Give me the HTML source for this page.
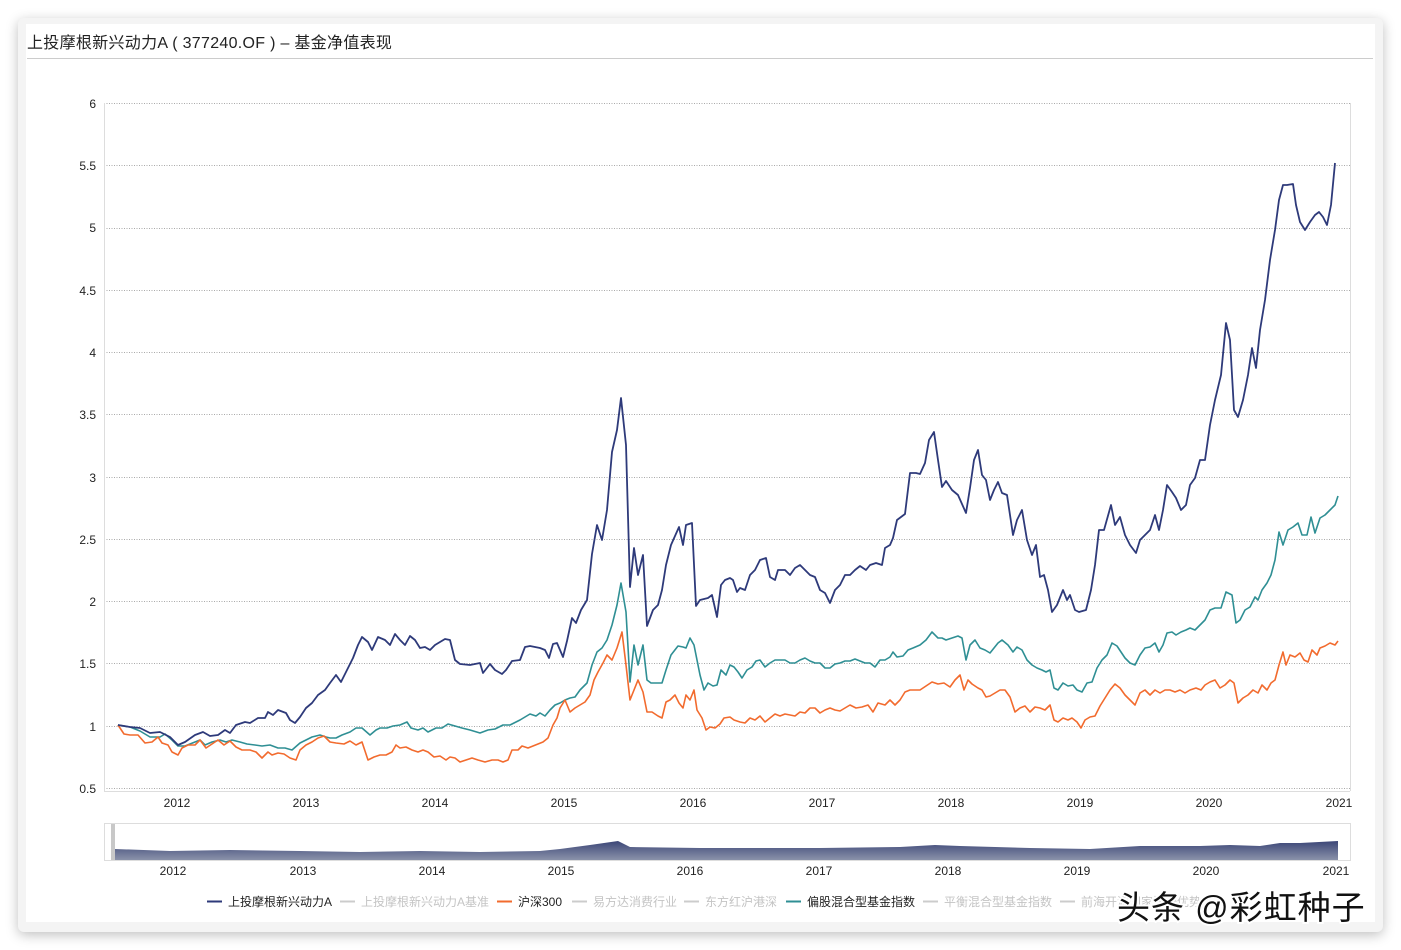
<!DOCTYPE html>
<html><head><meta charset="utf-8"><style>
html,body{margin:0;padding:0;background:#fff;width:1401px;height:950px;overflow:hidden}
.card{position:absolute;left:18px;top:18px;width:1365px;height:914px;background:#f4f4f4;border-radius:6px;box-shadow:0 3px 12px rgba(0,0,0,0.25)}
.inner{position:absolute;left:8px;top:6px;width:1349px;height:898px;background:#fff}
svg{position:absolute;left:0;top:0}
text{font-family:"Liberation Sans","Noto Sans CJK SC",sans-serif}
</style></head><body>
<div class="card"><div class="inner"></div></div>
<svg width="1401" height="950" viewBox="0 0 1401 950">
<text x="27" y="48" font-size="16" letter-spacing="0.3" fill="#222">上投摩根新兴动力A ( 377240.OF ) – 基金净值表现</text>
<line x1="27" y1="58.5" x2="1373" y2="58.5" stroke="#ccc"/>
<g stroke="#aaa" stroke-dasharray="1,1.5" stroke-width="1">
<line x1="104" y1="103.5" x2="1350" y2="103.5"/><line x1="104" y1="165.5" x2="1350" y2="165.5"/>
<line x1="104" y1="228.5" x2="1350" y2="228.5"/><line x1="104" y1="290.5" x2="1350" y2="290.5"/>
<line x1="104" y1="352.5" x2="1350" y2="352.5"/><line x1="104" y1="414.5" x2="1350" y2="414.5"/>
<line x1="104" y1="477.5" x2="1350" y2="477.5"/><line x1="104" y1="539.5" x2="1350" y2="539.5"/>
<line x1="104" y1="601.5" x2="1350" y2="601.5"/><line x1="104" y1="663.5" x2="1350" y2="663.5"/>
<line x1="104" y1="726.5" x2="1350" y2="726.5"/><line x1="104" y1="788.5" x2="1350" y2="788.5"/>
</g>
<line x1="104.5" y1="103" x2="104.5" y2="791" stroke="#ddd"/>
<line x1="1350.5" y1="103" x2="1350.5" y2="791" stroke="#ddd"/>
<line x1="104" y1="791.5" x2="1350" y2="791.5" stroke="#ddd"/>
<g font-size="12" fill="#222" text-anchor="end">
<text x="96" y="108">6</text><text x="96" y="170">5.5</text><text x="96" y="232">5</text><text x="96" y="295">4.5</text><text x="96" y="357">4</text><text x="96" y="419">3.5</text><text x="96" y="482">3</text><text x="96" y="544">2.5</text><text x="96" y="606">2</text><text x="96" y="668">1.5</text><text x="96" y="731">1</text><text x="96" y="793">0.5</text>
</g>
<g font-size="12" fill="#222" text-anchor="middle">
<text x="177" y="807">2012</text><text x="306" y="807">2013</text><text x="435" y="807">2014</text><text x="564" y="807">2015</text><text x="693" y="807">2016</text><text x="822" y="807">2017</text><text x="951" y="807">2018</text><text x="1080" y="807">2019</text><text x="1209" y="807">2020</text><text x="1339" y="807">2021</text>
<text x="173" y="875">2012</text><text x="303" y="875">2013</text><text x="432" y="875">2014</text><text x="561" y="875">2015</text><text x="690" y="875">2016</text><text x="819" y="875">2017</text><text x="948" y="875">2018</text><text x="1077" y="875">2019</text><text x="1206" y="875">2020</text><text x="1336" y="875">2021</text>
</g>
<defs><linearGradient id="g" x1="0" y1="0" x2="0" y2="1"><stop offset="0" stop-color="#3c4677"/><stop offset="1" stop-color="#8a92aa"/></linearGradient></defs>
<rect x="104.5" y="823.5" width="1246" height="37" fill="#fff" stroke="#ddd"/>
<path d="M115 849 L170 851 L230 850 L300 851 L360 852 L420 851 L480 852 L540 851 L560 849 L590 845 L618 841 L630 847 L700 848 L760 848 L820 848 L900 847 L935 845 L960 846 L1030 848 L1090 849 L1140 846 L1200 846 L1230 845 L1260 846 L1280 843 L1300 843 L1338 841 L1338 860 L115 860 Z" fill="url(#g)"/>
<rect x="111" y="824" width="4" height="36" fill="#c8c8c8"/>
<polyline fill="none" stroke="#2f8f94" stroke-width="1.6" stroke-linejoin="round" points="118,725 130,727 140,731 150,737 160,737 165,734 172,740 178,746 185,746 195,742 200,740 205,745 212,742 220,740 226,742 232,740 240,742 247,744 255,745 262,746 270,745 278,748 285,748 292,750 300,743 306,740 312,737 320,735 326,737 330,738 336,738 342,735 350,732 356,728 362,728 370,735 376,730 380,728 387,728 393,726 400,725 407,722 411,728 418,730 423,728 428,732 436,728 442,728 448,724 455,726 462,728 470,730 480,733 488,730 495,729 503,725 510,725 516,722 520,720 525,717 530,714 536,716 540,713 545,716 550,710 555,705 560,703 565,700 570,698 575,697 580,690 587,683 592,665 597,652 602,648 607,640 612,625 617,605 621,583 626,612 630,682 634,645 638,665 643,645 647,680 651,683 658,683 662,683 666,670 671,655 678,646 683,647 686,648 690,638 694,645 697,660 700,675 704,690 708,683 713,686 717,685 721,670 726,675 730,665 734,667 738,672 742,678 747,670 752,667 756,661 760,660 765,667 770,663 775,660 780,660 785,660 790,663 795,663 800,660 805,658 810,661 815,663 820,663 825,668 830,668 835,664 840,663 845,661 850,661 855,659 860,661 865,663 870,663 875,667 880,660 885,660 890,657 893,652 897,657 903,656 908,650 913,648 920,645 926,640 932,632 938,638 942,638 946,640 952,638 958,636 962,638 966,660 970,645 975,640 980,648 985,650 990,653 994,648 998,643 1002,640 1008,645 1013,652 1017,647 1022,650 1027,660 1032,665 1037,668 1042,670 1046,672 1050,670 1054,688 1058,690 1063,683 1068,686 1073,685 1077,690 1082,692 1087,683 1092,682 1097,668 1102,660 1107,655 1112,643 1117,646 1121,652 1125,658 1130,663 1135,665 1140,655 1145,648 1150,647 1155,643 1159,652 1163,645 1167,633 1172,632 1176,635 1181,632 1186,630 1190,628 1195,630 1200,625 1205,620 1210,610 1215,608 1221,608 1226,592 1232,595 1236,623 1240,620 1245,610 1250,607 1255,597 1258,600 1262,590 1267,583 1271,575 1275,560 1279,532 1283,545 1288,530 1293,527 1298,523 1302,535 1307,535 1311,517 1315,533 1320,518 1325,515 1330,510 1335,505 1338,496"/>
<polyline fill="none" stroke="#f26b2e" stroke-width="1.6" stroke-linejoin="round" points="118,725 124,734 130,735 138,735 145,743 152,742 158,737 162,743 168,745 172,752 178,755 182,748 188,745 195,745 200,740 206,748 212,744 218,740 224,745 230,741 236,747 242,750 250,750 256,752 262,758 268,752 272,755 278,753 284,754 290,758 296,760 300,750 306,745 312,742 318,738 324,736 330,742 336,743 344,744 350,741 356,745 362,742 368,760 374,757 380,755 386,755 392,752 396,745 400,748 406,747 412,750 418,752 423,750 428,752 434,757 440,756 446,760 450,757 455,758 460,762 466,760 472,758 478,760 485,762 492,760 498,760 503,762 508,760 512,750 518,750 522,746 528,748 533,746 538,744 543,742 548,738 553,725 557,718 560,708 565,700 570,712 575,708 580,705 585,702 590,695 594,680 598,672 603,663 607,655 612,660 617,648 622,632 626,665 630,700 634,690 638,680 643,692 647,712 652,712 658,716 662,718 666,702 670,700 675,695 679,703 683,708 686,695 690,700 694,690 697,710 702,718 706,730 710,727 715,728 720,724 724,718 730,717 734,720 740,722 745,723 750,718 755,720 760,716 765,722 770,718 775,714 780,716 785,714 790,715 795,716 800,712 805,713 810,708 815,708 820,713 825,710 830,708 835,710 840,711 845,708 850,705 856,708 862,707 868,705 873,712 878,703 885,705 890,700 895,705 900,700 905,692 910,690 915,690 920,690 926,686 932,682 938,684 944,683 950,687 955,680 960,675 964,690 968,680 972,684 978,688 982,690 986,697 990,696 995,693 1000,690 1005,690 1010,697 1015,712 1020,708 1025,706 1030,712 1035,707 1040,708 1045,710 1050,705 1054,720 1058,722 1063,718 1068,720 1072,718 1077,722 1081,728 1085,720 1090,717 1095,716 1100,706 1105,698 1110,690 1115,684 1120,688 1125,695 1130,700 1135,705 1140,693 1145,690 1150,695 1155,690 1160,693 1165,690 1170,690 1175,692 1180,690 1185,693 1190,690 1196,688 1201,690 1205,685 1210,682 1215,680 1220,688 1225,685 1230,680 1234,683 1238,703 1243,698 1248,695 1253,690 1258,693 1262,685 1267,690 1271,683 1275,680 1279,665 1283,652 1286,665 1290,655 1295,657 1300,653 1304,660 1308,662 1312,650 1317,655 1320,648 1325,646 1330,643 1335,645 1338,641"/>
<polyline fill="none" stroke="#2e3a7a" stroke-width="1.8" stroke-linejoin="round" points="118,725 130,727 140,728 150,733 160,732 170,737 178,745 185,742 195,735 203,732 210,736 218,735 225,730 230,733 236,725 245,722 250,723 258,718 265,718 268,712 273,715 278,710 286,713 290,720 295,723 300,717 306,708 312,703 318,695 325,690 330,683 336,675 341,682 348,668 353,658 358,645 362,637 368,642 372,650 378,637 385,640 390,645 395,634 400,640 405,645 410,636 415,640 420,648 425,647 430,650 435,645 440,642 445,639 450,640 455,660 460,664 470,665 480,663 483,673 490,664 495,670 502,674 506,670 512,661 520,660 525,647 530,646 540,648 545,650 549,658 553,644 557,643 563,657 567,641 572,618 576,623 581,610 587,600 592,554 597,525 602,540 607,510 612,452 617,430 621,398 626,445 630,587 634,548 638,575 643,555 647,626 650,618 653,610 658,605 662,590 666,565 671,545 679,527 683,545 686,525 692,523 696,606 700,600 708,598 712,595 717,617 721,585 725,580 730,578 733,580 737,592 740,588 745,590 750,575 755,570 760,560 766,558 770,577 775,580 778,570 785,570 790,575 795,568 800,565 805,570 810,575 815,577 820,590 825,593 830,603 835,590 840,585 845,575 850,575 855,570 860,566 866,570 870,565 876,563 882,565 885,548 890,545 893,538 897,520 905,514 910,473 916,473 920,474 925,463 929,440 934,432 938,460 942,487 946,481 952,490 958,495 962,504 966,513 970,488 974,460 978,450 982,475 986,480 990,500 994,490 998,482 1002,493 1007,495 1013,535 1017,520 1022,510 1027,540 1032,555 1036,545 1040,577 1044,575 1048,590 1052,612 1057,605 1063,590 1067,600 1070,595 1075,610 1079,612 1086,610 1091,590 1095,565 1099,530 1104,530 1111,505 1115,525 1120,517 1125,535 1130,545 1136,553 1140,540 1145,535 1150,530 1155,515 1159,530 1163,510 1167,485 1172,492 1176,498 1181,510 1186,505 1190,485 1195,478 1200,460 1205,460 1210,425 1215,400 1221,375 1226,323 1230,340 1234,410 1238,417 1243,400 1248,375 1252,348 1256,368 1260,330 1265,300 1270,260 1275,230 1279,200 1283,185 1287,185 1293,184 1296,205 1300,222 1305,230 1310,222 1315,215 1319,212 1323,217 1327,225 1331,205 1335,163"/>
<g font-size="12">
<line x1="207" y1="901.5" x2="222" y2="901.5" stroke="#2e3a7a" stroke-width="2"/><text x="228" y="906" fill="#222">上投摩根新兴动力A</text>
<line x1="340" y1="901.5" x2="355" y2="901.5" stroke="#ccc" stroke-width="2"/><text x="361" y="906" fill="#c4c4c4">上投摩根新兴动力A基准</text>
<line x1="497" y1="901.5" x2="512" y2="901.5" stroke="#f26b2e" stroke-width="2"/><text x="518" y="906" fill="#222">沪深300</text>
<line x1="572" y1="901.5" x2="587" y2="901.5" stroke="#ccc" stroke-width="2"/><text x="593" y="906" fill="#c4c4c4">易方达消费行业</text>
<line x1="684" y1="901.5" x2="699" y2="901.5" stroke="#ccc" stroke-width="2"/><text x="705" y="906" fill="#c4c4c4">东方红沪港深</text>
<line x1="786" y1="901.5" x2="801" y2="901.5" stroke="#2f8f94" stroke-width="2"/><text x="807" y="906" fill="#222">偏股混合型基金指数</text>
<line x1="923" y1="901.5" x2="938" y2="901.5" stroke="#ccc" stroke-width="2"/><text x="944" y="906" fill="#c4c4c4">平衡混合型基金指数</text>
<line x1="1060" y1="901.5" x2="1075" y2="901.5" stroke="#ccc" stroke-width="2"/><text x="1081" y="906" fill="#c4c4c4">前海开源国家比较优势</text>
</g>
<text x="1117" y="919" font-size="33" letter-spacing="1" fill="#111" stroke="#fff" stroke-width="4" paint-order="stroke" font-family="Liberation Sans,Noto Sans CJK SC,sans-serif">头条 @彩虹种子</text>
</svg>
</body></html>
